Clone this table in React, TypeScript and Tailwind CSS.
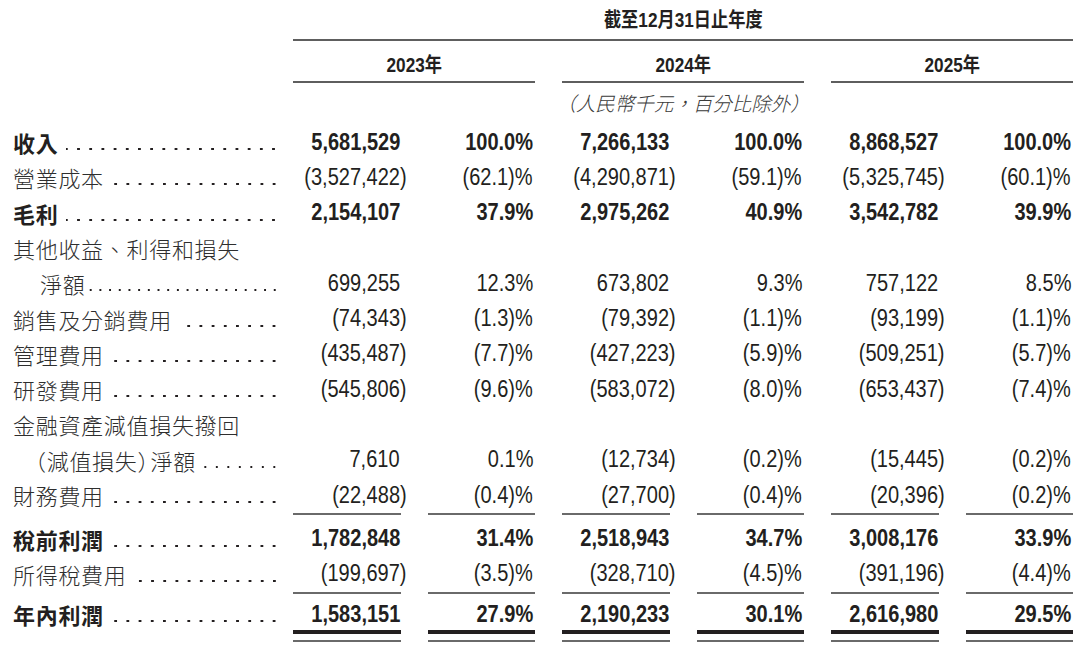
import React from "react";

type Row = {
  label: React.ReactNode;
  key: string;
  bold?: boolean;
  indent?: number;
  dots?: "wide" | "dense" | "tight" | "none";
  vals?: string[];
};

const rowsA: Row[] = [
  { key: "a", label: "收入", bold: true, vals: ["5,681,529", "100.0%", "7,266,133", "100.0%", "8,868,527", "100.0%"] },
  { key: "b", label: "營業成本", vals: ["(3,527,422)", "(62.1)%", "(4,290,871)", "(59.1)%", "(5,325,745)", "(60.1)%"] },
  { key: "c", label: "毛利", bold: true, vals: ["2,154,107", "37.9%", "2,975,262", "40.9%", "3,542,782", "39.9%"] },
  { key: "d", label: "其他收益、利得和損失", dots: "none" },
  { key: "e", label: "淨額", indent: 40, dots: "dense", vals: ["699,255", "12.3%", "673,802", "9.3%", "757,122", "8.5%"] },
  { key: "f", label: "銷售及分銷費用", vals: ["(74,343)", "(1.3)%", "(79,392)", "(1.1)%", "(93,199)", "(1.1)%"] },
  { key: "g", label: "管理費用", vals: ["(435,487)", "(7.7)%", "(427,223)", "(5.9)%", "(509,251)", "(5.7)%"] },
  { key: "h", label: "研發費用", vals: ["(545,806)", "(9.6)%", "(583,072)", "(8.0)%", "(653,437)", "(7.4)%"] },
  { key: "i", label: "金融資產減值損失撥回", dots: "none" },
  {
    key: "j",
    label: (
      <>
        （減值損失<span className="tracking-[-9px]">）</span>淨額
      </>
    ),
    indent: 24,
    dots: "tight",
    vals: ["7,610", "0.1%", "(12,734)", "(0.2)%", "(15,445)", "(0.2)%"],
  },
  { key: "k", label: "財務費用", vals: ["(22,488)", "(0.4)%", "(27,700)", "(0.4)%", "(20,396)", "(0.2)%"] },
];

const rowsB: Row[] = [
  { key: "l", label: "稅前利潤", bold: true, vals: ["1,782,848", "31.4%", "2,518,943", "34.7%", "3,008,176", "33.9%"] },
  { key: "m", label: "所得稅費用", vals: ["(199,697)", "(3.5)%", "(328,710)", "(4.5)%", "(391,196)", "(4.4)%"] },
];

const rowC: Row = { key: "n", label: "年內利潤", bold: true, vals: ["1,583,151", "27.9%", "2,190,233", "30.1%", "2,616,980", "29.5%"] };

const NUM = "font-['Liberation_Sans',Arial,sans-serif]";
const CJK = "font-['Noto_Sans_CJK_TC','Noto_Sans_CJK_SC',sans-serif]";
const HEAD = "font-['Liberation_Sans','Noto_Sans_CJK_TC',sans-serif]";

const widths = ["w-[108px]", "w-[107px]", "w-[108px]", "w-[107px]", "w-[108px]", "w-[107px]"];

function Value({ v, pct, bold }: { v: string; pct: boolean; bold?: boolean }) {
  const hang = !pct && v.endsWith(")");
  const main = hang ? v.slice(0, -1) : v;
  return (
    <span
      className={`inline-block origin-right scale-x-[0.87] ${NUM} text-[23px] leading-none ${
        bold ? "font-bold" : "font-normal"
      } text-[#231f20] whitespace-nowrap`}
    >
      {main}
      {hang && <span className="inline-block w-0">)</span>}
    </span>
  );
}

function Leader({ kind }: { kind: "wide" | "dense" | "tight" }) {
  const cls =
    kind === "wide"
      ? "ml-[8px] bg-[length:12.2px_4px]"
      : kind === "tight"
      ? "ml-[3px] bg-[length:11.5px_4px]"
      : "ml-[2px] bg-[length:9.7px_4px]";
  return (
    <span
      className={`flex-1 h-[4px] mt-[14px] bg-repeat-x bg-right bg-[radial-gradient(circle,#231f20_1.1px,transparent_1.5px)] ${cls}`}
    />
  );
}

function TableRow({ r, h = "h-[35.3px]" }: { r: Row; h?: string }) {
  const dots = r.dots ?? "wide";
  return (
    <div className={`flex items-center ${h}`}>
      <div className="w-[280px] flex items-center" style={{ paddingLeft: r.indent ?? 13 }}>
        <span
          className={`shrink-0 ${CJK} text-[22px] tracking-[0.7px] leading-none whitespace-nowrap ${
            r.bold ? "font-bold text-[#231f20]" : "font-light text-[#2e2e2e]"
          }`}
        >
          {r.label}
        </span>
        {dots !== "none" && <Leader kind={dots} />}
      </div>
      <div className="ml-[13px] flex gap-[27px]">
        {widths.map((w, i) => (
          <div key={i} className={`${w} flex justify-end ${i % 2 === 0 ? "pr-[1px]" : "pr-[2px]"}`}>
            {r.vals && <Value v={r.vals[i]} pct={i % 2 === 1} bold={r.bold} />}
          </div>
        ))}
      </div>
    </div>
  );
}

function Lines({ kind }: { kind: "single" | "double" }) {
  return (
    <div className="flex ml-[293px] gap-[27px]">
      {widths.map((w, i) =>
        kind === "single" ? (
          <div key={i} className={`${w} h-[2px] bg-[#6a6a6a]`} />
        ) : (
          <div key={i} className={`${w} flex flex-col`}>
            <div className="h-[4px] bg-[#231f20]" />
            <div className="h-[6px]" />
            <div className="h-[2px] bg-[#6a6a6a]" />
          </div>
        )
      )}
    </div>
  );
}

export default function App() {
  return (
    <div className="w-[1080px] h-[649px] bg-white overflow-hidden">
      {/* header */}
      <div className="ml-[293px] w-[780px]">
        <div className="h-[39px] flex items-center justify-center pt-[1px]">
          <span className={`inline-block scale-x-[0.86] ${HEAD} font-bold text-[20px] leading-none text-[#231f20] whitespace-nowrap`}>
            截至12月31日止年度
          </span>
        </div>
        <div className="h-[2px] bg-[#5e5e5e]" />
        <div className="flex gap-[27px]">
          {["2023年", "2024年", "2025年"].map((y) => (
            <div key={y} className="w-[242px] flex flex-col">
              <div className="h-[40px] flex items-center justify-center pt-[7px]">
                <span className={`inline-block scale-x-[0.86] ${HEAD} font-bold text-[20px] leading-none text-[#231f20]`}>
                  {y}
                </span>
              </div>
              <div className="h-[2px] bg-[#5e5e5e]" />
            </div>
          ))}
        </div>
        <div className="h-[41.4px] flex items-center justify-center pb-[1px]">
          <span className={`${CJK} italic font-light text-[19.5px] leading-none text-[#3a3a3a] whitespace-nowrap`}>
            （人民幣千元，百分比除外）
          </span>
        </div>
      </div>
      {/* body */}
      <div className="flex flex-col">
        {rowsA.map((r) => (
          <TableRow key={r.key} r={r} />
        ))}
        <Lines kind="single" />
        <div className="h-[6.3px]" />
        {rowsB.map((r) => (
          <TableRow key={r.key} r={r} />
        ))}
        <Lines kind="single" />
        <div className="h-[5px]" />
        <TableRow r={rowC} h="h-[31px]" />
        <Lines kind="double" />
      </div>
    </div>
  );
}
